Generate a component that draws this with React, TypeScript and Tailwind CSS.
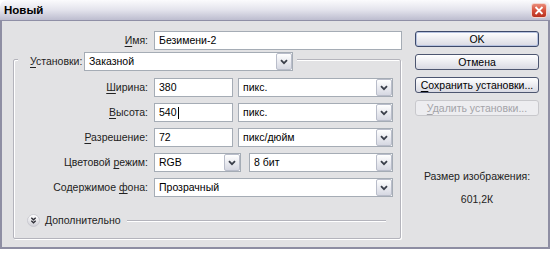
import React from "react";

const Chevron = () => (
  <svg width="8" height="6" viewBox="0 0 8 6">
    <path d="M1 1.2 L4 4.2 L7 1.2" fill="none" stroke="#3a3f4a" strokeWidth="1.8" />
  </svg>
);

const Arrow = () => (
  <div className="h-[17px] w-[16px] border border-[#b9bdca] rounded-[2px] bg-gradient-to-b from-[#ffffff] to-[#d6d8e2] flex items-center justify-center">
    <Chevron />
  </div>
);

const Field = ({ className, children }: { className: string; children?: React.ReactNode }) => (
  <div className={`h-[19px] border border-[#a5acb5] bg-white flex items-center pl-[4px] text-black ${className}`}>
    {children}
  </div>
);

const Select = ({ className, children }: { className: string; children?: React.ReactNode }) => (
  <div className={`h-[19px] border border-[#a5acb5] bg-white flex items-center justify-between pl-[4px] text-black ${className}`}>
    <span>{children}</span>
    <Arrow />
  </div>
);

const Label = ({ children }: { children: React.ReactNode }) => (
  <div className="w-[134px] text-right text-[#222222] shrink-0">{children}</div>
);

const U = ({ children }: { children: React.ReactNode }) => <span className="underline underline-offset-[2px]">{children}</span>;

const Btn = ({ children, def, disabled }: { children: React.ReactNode; def?: boolean; disabled?: boolean }) => (
  <div
    className={
      disabled
        ? "h-[16px] w-[124px] rounded-[3px] border border-[#c8c8cc] bg-[#ededf0] text-[#a3a3a8] flex items-center justify-center"
        : def
        ? "h-[16px] w-[124px] rounded-[3px] border border-[#3d4a6b] bg-gradient-to-b from-[#ffffff] to-[#d9dae3] shadow-[inset_0_0_0_1px_#b7c3e0] text-black flex items-center justify-center"
        : "h-[16px] w-[124px] rounded-[3px] border border-[#4d5670] bg-gradient-to-b from-[#ffffff] to-[#d9dae3] text-black flex items-center justify-center"
    }
  >
    {children}
  </div>
);

export default function App() {
  return (
    <div className="w-[550px] h-[253px] bg-white font-['Liberation_Sans',Arial,sans-serif] text-[10.5px] leading-[13px]">
      <div className="w-[550px] h-[249px] flex flex-col rounded-t-[7px] overflow-hidden">
        {/* title bar */}
        <div className="h-[21px] shrink-0 flex items-center justify-between bg-gradient-to-b from-[#fbfbfd] via-[#e3e3ec] to-[#bdbdcf] border-b border-[#8f8fa6] pl-[4px] pr-[3px]">
          <span className="font-bold text-[11.5px] text-black">Новый</span>
          <div className="w-[16px] h-[15px] rounded-[3px] border border-[#f3d6d0] bg-gradient-to-b from-[#e98a78] via-[#d5503c] to-[#b9301e] flex items-center justify-center">
            <svg width="10" height="9" viewBox="0 0 10 9">
              <path d="M1.5 1 L8.5 8 M8.5 1 L1.5 8" stroke="#fff" strokeWidth="1.8" />
            </svg>
          </div>
        </div>
        {/* body */}
        <div className="flex-1 flex bg-[#e2e2e4] border-l-2 border-r-2 border-b-2 border-[#8e8ea3]">
          {/* left column */}
          <div className="ml-[11px] w-[388px] flex flex-col">
            <div className="mt-[10px] flex items-center gap-[6px] w-[389px]">
              <div className="w-[135px] text-right text-[#222222]">
                <U>И</U>мя:
              </div>
              <Field className="w-[248px]">Безимени-2</Field>
            </div>
            {/* group box */}
            <div className="mt-[9px] h-[180px] w-[388px] border border-[#b4b4bc] rounded-[2px] shadow-[inset_1px_1px_0_#ffffff,1px_1px_0_#ffffff] flex flex-col">
              <div className="-mt-[8px] ml-[4px] w-fit bg-[#e2e2e4] pl-[12px] pr-[4px] flex items-center">
                <div className="w-[54px] text-[#222222]">
                  <U>У</U>становки:
                </div>
                <Select className="w-[209px]">Заказной</Select>
              </div>
              <div className="mt-[7px] flex flex-col gap-[6px]">
                <div className="flex items-center">
                  <Label>
                    <U>Ш</U>ирина:
                  </Label>
                  <Field className="ml-[6px] w-[79px]">380</Field>
                  <Select className="ml-[5px] w-[155px]">пикс.</Select>
                </div>
                <div className="flex items-center">
                  <Label>
                    <U>В</U>ысота:
                  </Label>
                  <Field className="ml-[6px] w-[79px]">
                    540<span className="inline-block w-px h-[12px] bg-black ml-[1px]" />
                  </Field>
                  <Select className="ml-[5px] w-[155px]">пикс.</Select>
                </div>
                <div className="flex items-center">
                  <Label>
                    <U>Р</U>азрешение:
                  </Label>
                  <Field className="ml-[6px] w-[79px]">72</Field>
                  <Select className="ml-[5px] w-[155px]">пикс/дюйм</Select>
                </div>
                <div className="flex items-center">
                  <Label>
                    Цветовой <U>р</U>ежим:
                  </Label>
                  <Select className="ml-[6px] w-[87px]">RGB</Select>
                  <Select className="ml-[8px] w-[144px]">8 бит</Select>
                </div>
                <div className="flex items-center">
                  <Label>
                    Содержимое <U>ф</U>она:
                  </Label>
                  <Select className="ml-[6px] w-[239px]">Прозрачный</Select>
                </div>
              </div>
              <div className="mt-[17px] flex items-center pl-[13px] pr-[14px]">
                <svg width="13" height="13" viewBox="0 0 13 13" className="shrink-0">
                  <defs>
                    <linearGradient id="cg" x1="0" y1="0" x2="0" y2="1">
                      <stop offset="0" stopColor="#ffffff" />
                      <stop offset="1" stopColor="#cfcfd6" />
                    </linearGradient>
                  </defs>
                  <circle cx="6.5" cy="6.5" r="6" fill="url(#cg)" stroke="#c4c4cc" strokeWidth="0.8" />
                  <path d="M4.3 3.8 L6.5 5.8 L8.7 3.8 M4.3 6.8 L6.5 8.8 L8.7 6.8" fill="none" stroke="#2c2c34" strokeWidth="1.3" />
                </svg>
                <span className="ml-[5px] text-[#222222]">Дополнительно</span>
                <div className="ml-[6px] flex-1 h-[2px] border-t border-[#b4b4bc] border-b-white border-b" />
              </div>
            </div>
          </div>
          {/* right column */}
          <div className="ml-[14px] w-[124px] flex flex-col">
            <div className="mt-[10px] flex flex-col gap-[7px]">
              <Btn def>OK</Btn>
              <Btn>Отмена</Btn>
              <Btn>
                <span>
                  <U>С</U>охранить установки...
                </span>
              </Btn>
              <Btn disabled>
                <span>
                  <U>У</U>далить установки...
                </span>
              </Btn>
            </div>
            <div className="mt-[54px] text-center text-[#222222]">Размер изображения:</div>
            <div className="mt-[10px] text-center text-[#222222]">601,2К</div>
          </div>
        </div>
      </div>
    </div>
  );
}
